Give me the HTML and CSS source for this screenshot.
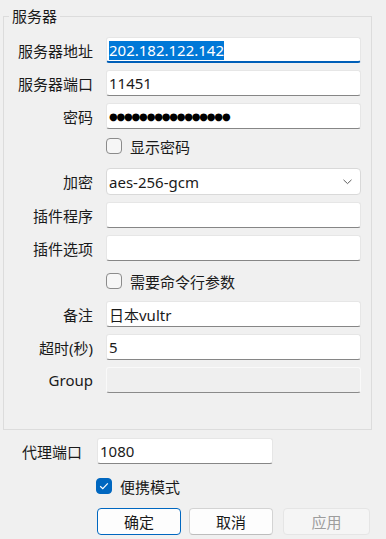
FILE: index.html
```html
<!DOCTYPE html>
<html lang="zh-CN">
<head>
  <meta charset="UTF-8" />
  <title>服务器</title>
  <link rel="stylesheet" href="styles.css">
</head>
<body>
  <div class="dialog">
    <fieldset class="group">
      <legend>服务器</legend>
      <div class="form server-form">
        <label class="lbl">服务器地址</label>
        <div class="field focus"><span class="sel">202.182.122.142</span></div>

        <label class="lbl">服务器端口</label>
        <div class="field">11451</div>

        <label class="lbl">密码</label>
        <div class="field"><span class="dots">●●●●●●●●●●●●●●●●</span></div>

        <div></div>
        <label class="check top"><span class="box"></span>显示密码</label>

        <label class="lbl">加密</label>
        <div class="combo">
          <span>aes-256-gcm</span>
          <svg class="chevron" width="9" height="6" viewBox="0 0 9 6"><polyline points="0.5,0.8 4.5,4.6 8.5,0.8" fill="none" stroke="#5f5f5f" stroke-width="1"/></svg>
        </div>

        <label class="lbl">插件程序</label>
        <div class="field"></div>

        <label class="lbl">插件选项</label>
        <div class="field"></div>

        <div></div>
        <label class="check"><span class="box"></span>需要命令行参数</label>

        <label class="lbl">备注</label>
        <div class="field">日本vultr</div>

        <label class="lbl">超时(秒)</label>
        <div class="field">5</div>

        <label class="lbl">Group</label>
        <div class="field disabled"></div>
      </div>
    </fieldset>

    <div class="form local-form">
      <label class="lbl">代理端口</label>
      <div class="field">1080</div>
      <div></div>

      <div></div>
      <label class="check portable"><span class="box checked">
        <svg width="10" height="8" viewBox="0 0 10 8"><polyline points="1.2,4.2 3.8,6.6 8.8,1.4" fill="none" stroke="#fff" stroke-width="1.2"/></svg>
      </span>便携模式</label>
      <div></div>

      <div></div>
      <div class="buttons">
        <button class="btn default">确定</button>
        <button class="btn">取消</button>
        <button class="btn off" disabled>应用</button>
      </div>
    </div>
  </div>
</body>
</html>
```

FILE: styles.css
```css
body {
  margin: 0;
  background-color: #f0f0f0;
  font-family: "Noto Sans", "Noto Sans CJK SC", sans-serif;
  font-size: 15px;
  color: #1a1a1a;
  width: 386px;
  height: 539px;
  overflow: hidden;
}
.dialog {
  padding: 6px 0 0 3px;
}
.group {
  margin: 0;
  width: 369px;
  box-sizing: border-box;
  border: 1px solid #dcdcdc;
  padding: 11px 10px 36px 0;
}
.group legend {
  margin-left: 5px;
  padding: 0 3px;
  line-height: 20px;
}

.form {
  display: grid;
  row-gap: 7px;
}
.server-form {
  grid-template-columns: 89px 255px;
  grid-template-rows: 26px 26px 26px 25px 27px 26px 26px 26px 26px 26px 26px;
  column-gap: 13px;
}
.local-form {
  margin-top: 8px;
  grid-template-columns: 79px 176px 1fr;
  grid-template-rows: 26px 30px 27px;
  column-gap: 15px;
}

.lbl {
  display: flex;
  align-items: center;
  justify-content: flex-end;
  white-space: nowrap;
}

.field, .combo {
  box-sizing: border-box;
  background-color: #fff;
  border: 1px solid #e6e6e6;
  border-bottom-color: #868686;
  border-radius: 3px;
  padding: 0 2px;
  display: flex;
  align-items: center;
  white-space: nowrap;
}
.field.focus {
  border-bottom: 2px solid #005fb8;
  padding-top: 1px;
}
.field .sel {
  background-color: #0078d7;
  color: #fff;
  line-height: 19px;
}
.field .dots {
  font-family: "DejaVu Sans", sans-serif;
  font-size: 10px;
  letter-spacing: -1.2px;
  color: #000;
}
.field.disabled {
  background-color: #efefef;
  border-color: #f9f9f9;
  border-bottom-color: #8a8a8a;
}

.combo {
  border-color: #d9d9d9;
  border-radius: 4px;
  justify-content: space-between;
  padding-right: 8px;
}
.chevron { margin-top: 1px; }

.check {
  display: flex;
  align-items: center;
  white-space: nowrap;
}
.check.top {
  padding-bottom: 5px;
}
.check .box {
  box-sizing: border-box;
  width: 16px;
  height: 16px;
  border: 1px solid #8b8b8b;
  border-radius: 4px;
  background-color: #f6f6f6;
  margin-right: 8px;
  display: flex;
  align-items: center;
  justify-content: center;
}
.check .box.checked {
  background-color: #0067c0;
  border-color: #0067c0;
}
.portable { margin-left: -1px; }

.buttons {
  grid-column: 2 / 4;
  display: flex;
}
.btn {
  box-sizing: border-box;
  width: 84px;
  height: 27px;
  margin-right: 8px;
  font-family: inherit;
  font-size: 15px;
  color: #1a1a1a;
  background-color: #fdfdfd;
  border: 1px solid #d3d3d3;
  border-bottom-color: #bdbdbd;
  border-radius: 4px;
  padding: 0;
}
.btn.default {
  border-color: #0067c0;
}
.btn.off {
  width: 87px;
  margin-left: 2px;
  margin-right: 0;
  color: #9d9d9d;
  background-color: #f5f5f5;
  border-color: #e5e5e5;
}
```
